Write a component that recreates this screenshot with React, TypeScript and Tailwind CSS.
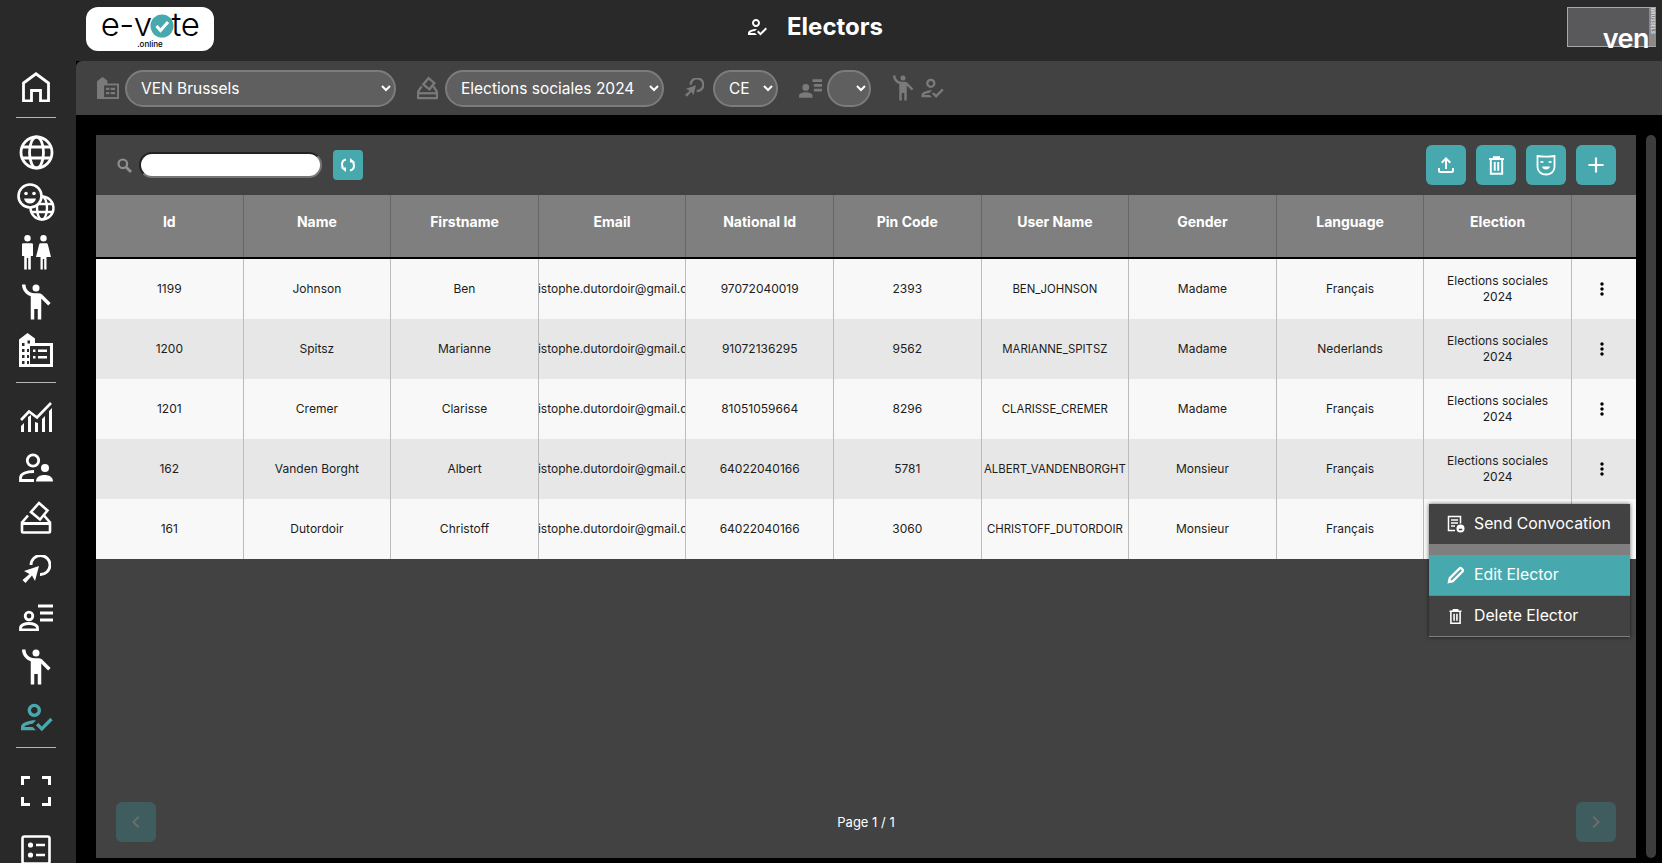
import type { ReactNode } from "react";
import {
  MdAdd,
  MdChevronLeft,
  MdChevronRight,
  MdEmojiPeople,
  MdMoreVert,
  MdOutlineFileUpload,
  MdOutlineHowToReg,
} from "react-icons/md";

const font = { fontFamily: '"Inter", "Liberation Sans", sans-serif' };

const electors = [
  ["1199", "Johnson", "Ben", "97072040019", "2393", "BEN_JOHNSON", "Madame", "Français"],
  ["1200", "Spitsz", "Marianne", "91072136295", "9562", "MARIANNE_SPITSZ", "Madame", "Nederlands"],
  ["1201", "Cremer", "Clarisse", "81051059664", "8296", "CLARISSE_CREMER", "Madame", "Français"],
  ["162", "Vanden Borght", "Albert", "64022040166", "5781", "ALBERT_VANDENBORGHT", "Monsieur", "Français"],
  ["161", "Dutordoir", "Christoff", "64022040166", "3060", "CHRISTOFF_DUTORDOIR", "Monsieur", "Français"],
];

const headers = ["Id", "Name", "Firstname", "Email", "National Id", "Pin Code", "User Name", "Gender", "Language", "Election", ""];

function HomeIcon() {
  return (
    <svg width="28" height="30" viewBox="0 0 28 30" fill="none" stroke="currentColor" strokeWidth="2.800">
      <path d="M1.500 29V11L14 1.800 26.500 11v18h-8V18.500h-9V29z" />
    </svg>
  );
}

function GlobeIcon() {
  return (
    <svg width="35" height="35" viewBox="0 0 35 35" fill="none" stroke="currentColor" strokeWidth="2.800">
      <circle cx="17.500" cy="17.500" r="15.500" />
      <ellipse cx="17.500" cy="17.500" rx="7" ry="15.500" />
      <path d="M3.500 12h28M3.500 23h28" />
    </svg>
  );
}

function FaceGlobeIcon() {
  return (
    <svg width="38" height="38" viewBox="0 0 38 38" fill="none" stroke="currentColor" strokeWidth="2.400">
      <circle cx="25" cy="25" r="11.500" />
      <ellipse cx="25" cy="25" rx="5" ry="11.500" />
      <path d="M14 21h22M14 29h22" />
      <circle cx="13" cy="13" r="11.500" fill="#292929" strokeWidth="2.600" />
      <circle cx="9" cy="10.500" r="1.800" fill="currentColor" stroke="none" />
      <circle cx="17" cy="10.500" r="1.800" fill="currentColor" stroke="none" />
      <path d="M7 15.500h12c-.8 3.500-3 5-6 5s-5.200-1.500-6-5z" fill="currentColor" stroke="none" />
    </svg>
  );
}

function PeopleIcon() {
  return (
    <svg width="30" height="35" viewBox="0 0 30 35" fill="currentColor">
      <circle cx="6.500" cy="3.200" r="3.200" />
      <circle cx="22.500" cy="3.200" r="3.200" />
      <path d="M1 9.500q0-1.200 1.200-1.200h8.600q1.200 0 1.200 1.200V21H9.800v13.500H7.200V23H5.800v11.500H3.200V21H1z" />
      <path d="M19.500 8.300h6q1 0 1.300 1L30 22h-4.500v12.500h-2.300V24h-1.400v10.500h-2.300V22H15l3.200-12.700q.3-1 1.300-1z" />
    </svg>
  );
}

function BuildingIcon() {
  return (
    <svg width="34" height="34" viewBox="0 0 34 34" fill="currentColor">
      <path d="M0 34V6.500L8.500 0 16 5.500V10h18v24z" />
      <path d="M11 13h20v18H11zM3 10h2.500v3H3zM8.500 7.500H11v3H8.500zM3 16h2.500v3H3zM3 22h2.500v3H3zM3 28h2.500v3H3zM8 16h2v3H8zM8 22h2v3H8zM8 28h2v3H8z" fill="#292929" />
      <path d="M14 16.500h2.500V19H14zM19 16.500h9V19h-9zM14 23h2.500v2.500H14zM19 23h9v2.500h-9z" />
    </svg>
  );
}

function ChartIcon() {
  return (
    <svg width="32" height="30" viewBox="0 0 32 30" fill="currentColor">
      <path d="M1 18l8-8.500 8 6L31 1" fill="none" stroke="currentColor" strokeWidth="2.600" />
      <path d="M1 30v-6l3-3v9zM8 30V15l3-2v17zM15 30V20l3 1v9zM22 30V17l3-3v16zM29 30V9l3-3v24z" />
    </svg>
  );
}

function UsersIcon() {
  return (
    <svg width="34" height="29" viewBox="0 0 34 29" fill="none" stroke="currentColor" strokeWidth="2.800">
      <circle cx="14" cy="7.500" r="5.700" />
      <path d="M15 18.500C8 18.500 1.500 20.500 1.500 25v2.500H15" />
      <circle cx="26" cy="15" r="4" fill="currentColor" stroke="none" />
      <path d="M17 28.500c0-4.500 4-6.500 8.500-6.500s8.500 2 8.500 6.500z" fill="currentColor" stroke="none" />
    </svg>
  );
}

function BallotIcon() {
  return (
    <svg width="32" height="33" viewBox="0 0 32 33" fill="none" stroke="currentColor" strokeWidth="2.600">
      <path d="M19 2l8.500 7.500-7.500 9-9-7.500z" />
      <path d="M8 14.500L2 21.500v9q0 1 1 1h26q1 0 1-1v-9l-6-7" />
      <path d="M3 22.500h26" strokeWidth="3" />
    </svg>
  );
}

function TargetIcon() {
  return (
    <svg width="30" height="30" viewBox="0 0 30 30" fill="none" stroke="currentColor" strokeWidth="2.800">
      <path d="M10 10A9.500 9.500 0 1 1 19 19.500" />
      <path d="M18 11l-4 15-3-5.500-6.500 7.500-3-3 7-6L3 16z" fill="currentColor" stroke="none" />
    </svg>
  );
}

function ListPersonIcon() {
  return (
    <svg width="34" height="27" viewBox="0 0 34 27" fill="none" stroke="currentColor" strokeWidth="2.800">
      <circle cx="10" cy="12" r="3.800" />
      <path d="M1.500 26v-2c0-3 4.500-4.500 8.500-4.500s8.500 1.500 8.500 4.500v2z" />
      <path d="M19 2h15M21 9h13M21 16h13" />
    </svg>
  );
}

function FullscreenIcon() {
  return (
    <svg width="30" height="30" viewBox="0 0 30 30" fill="none" stroke="currentColor" strokeWidth="3">
      <path d="M1.500 9V1.500H9M21 1.500h7.500V9M28.500 21v7.500H21M9 28.500H1.500V21" />
    </svg>
  );
}

function ChecklistIcon() {
  return (
    <svg width="30" height="30" viewBox="0 0 30 30" fill="none" stroke="currentColor" strokeWidth="2.600">
      <rect x="1.500" y="1.500" width="27" height="27" rx="2" />
      <circle cx="9.500" cy="10" r="2.600" fill="currentColor" stroke="none" />
      <circle cx="9.500" cy="20" r="2.600" fill="currentColor" stroke="none" />
      <path d="M15 10h9M15 20h9" />
    </svg>
  );
}

function MaskIcon() {
  return (
    <svg width="20" height="22" viewBox="0 0 20 22" fill="none" stroke="currentColor" strokeWidth="1.800">
      <path d="M1.500 2c5 .8 12 .8 17 0v11c0 4.500-4 7.500-8.500 7.500S1.500 17.500 1.500 13z" />
      <path d="M4.500 8.500c.8-1 2-1 2.800 0M12.700 8.500c.8-1 2-1 2.800 0" strokeWidth="1.500" />
      <path d="M6 12.500h8c-.6 2.200-2 3-4 3s-3.400-.8-4-3z" fill="currentColor" stroke="none" />
    </svg>
  );
}

function TrashIcon({ size }: { size: number }) {
  return (
    <svg width={size} height={size} viewBox="0 0 24 24" fill="none" stroke="currentColor" strokeWidth="2.200">
      <path d="M3.500 4.500h17M9 4.500V2.500h6v2" />
      <path d="M5.500 4.500v17h13v-17" />
      <path d="M10 8v10M14 8v10" />
    </svg>
  );
}

function PencilIcon() {
  return (
    <svg width="18" height="18" viewBox="0 0 18 18" fill="none" stroke="currentColor" strokeWidth="2.400">
      <path d="M2 16l.8-3.800L12.500 2.500c.6-.6 1.400-.6 2 0l1 1c.6.6.6 1.400 0 2L5.800 15.200z" />
    </svg>
  );
}

function ConvocationIcon() {
  return (
    <svg width="18" height="18" viewBox="0 0 18 18" fill="none" stroke="currentColor" strokeWidth="1.500">
      <path d="M8 15.500H1.500V1.500h12v7" />
      <path d="M4 5h7M4 8h7M4 11h4" />
      <circle cx="13.500" cy="13.500" r="4" fill="currentColor" stroke="none" />
      <path d="M11.800 14.500h3.400M13.500 12.200v.1" stroke="#424242" />
    </svg>
  );
}

function RefreshIcon() {
  return (
    <svg width="16" height="16" viewBox="0 0 16 16" fill="none" stroke="currentColor" strokeWidth="2">
      <path d="M6 2.500C3.500 3 2 5 2 7.500c0 1.200.4 2.300 1.200 3.200" />
      <path d="M10 13.500c2.500-.5 4-2.500 4-5 0-1.200-.4-2.300-1.200-3.200" />
      <path d="M.5 10.500h5.500V15zM15.500 5.500H10V1z" fill="currentColor" stroke="none" />
    </svg>
  );
}

function SearchIcon() {
  return (
    <svg width="15" height="15" viewBox="0 0 15 15" fill="none" stroke="currentColor" strokeWidth="2.200" className="text-[#8f8f8f]">
      <circle cx="5.800" cy="5.800" r="4.300" />
      <path d="M9 9l5 5" strokeWidth="2.800" />
    </svg>
  );
}

function SideSlot({ children, className }: { children: ReactNode; className?: string }) {
  return <div className={"flex h-[50px] shrink-0 items-center justify-center pr-1 text-white " + (className ?? "")}>{children}</div>;
}

function SideDivider({ className }: { className: string }) {
  return <div className={"mr-5 ml-4 h-px shrink-0 bg-[#b5b5b5] " + className} />;
}

function Sidebar() {
  return (
    <aside className="flex h-full w-[76px] shrink-0 flex-col overflow-hidden bg-[#292929] pt-[62px]">
      <SideSlot><HomeIcon /></SideSlot>
      <SideDivider className="mt-[5px] mb-[9px]" />
      <SideSlot><GlobeIcon /></SideSlot>
      <SideSlot><FaceGlobeIcon /></SideSlot>
      <SideSlot><PeopleIcon /></SideSlot>
      <SideSlot><MdEmojiPeople size={42} /></SideSlot>
      <SideSlot className="-mt-[2px]"><BuildingIcon /></SideSlot>
      <SideDivider className="mt-[7px] mb-[9px]" />
      <SideSlot><ChartIcon /></SideSlot>
      <SideSlot><UsersIcon /></SideSlot>
      <SideSlot><BallotIcon /></SideSlot>
      <SideSlot className="pt-[6px]"><TargetIcon /></SideSlot>
      <SideSlot><ListPersonIcon /></SideSlot>
      <SideSlot><MdEmojiPeople size={42} /></SideSlot>
      <SideSlot><MdOutlineHowToReg size={40} className="text-[#47a9ad]" /></SideSlot>
      <SideDivider className="mt-[5px] mb-[18px]" />
      <SideSlot><FullscreenIcon /></SideSlot>
      <SideSlot className="mt-[9px]"><ChecklistIcon /></SideSlot>
    </aside>
  );
}

function Logo() {
  return (
    <div className="flex h-11 w-32 flex-col items-center rounded-xl bg-white pt-px text-black">
      <div className="flex h-8 items-center text-[33px] leading-none font-light tracking-[-0.5px]">
        <span>e-v</span>
        <svg width="24" height="24" viewBox="0 0 24 24" className="mx-[-2px] mt-[3px]">
          <circle cx="12" cy="12" r="11.500" fill="#47a9ad" />
          <path d="M6.500 12l4 4.500 7.500-8.500" fill="none" stroke="#fff" strokeWidth="3" />
        </svg>
        <span>te</span>
      </div>
      <div className="text-[8px] leading-[9px] font-medium">.online</div>
    </div>
  );
}

function VenLogo() {
  return (
    <div className="relative mr-[6px] flex h-10 w-[89px] items-end justify-end border border-r-0 border-[#a8a8a8] bg-[#59595b] pr-[7px]">
      <span className="translate-y-[5px] text-[27px] leading-[24px] font-semibold tracking-[-0.5px] text-white">ven</span>
      <span className="absolute top-0 right-0 h-full w-[7px] overflow-hidden bg-[#8a8a8a] text-[5px] leading-[7px] text-white [writing-mode:vertical-rl]">BRUSSELS</span>
    </div>
  );
}

function FilterSelect({ options, className }: { options: string[]; className: string }) {
  return (
    <select className={"h-[37px] rounded-full border-2 border-[#7c7c7c] bg-[#5f5f5f] pl-[10px] text-[15.500px] text-white outline-none " + className}>
      {options.map((o) => (
        <option key={o}>{o}</option>
      ))}
    </select>
  );
}

function FilterBar() {
  return (
    <div className="flex h-[54px] shrink-0 items-center rounded-tl-md bg-[#424242] pl-[21px] text-[#7a7a7a]">
      <BuildingIcon2 />
      <FilterSelect options={["VEN Brussels"]} className="ml-[6px] w-[271px]" />
      <div className="ml-[21px]"><BallotSmall /></div>
      <FilterSelect options={["Elections sociales 2024"]} className="ml-[7px] w-[219px]" />
      <div className="ml-[20px]"><TargetSmall /></div>
      <FilterSelect options={["CE"]} className="ml-[9px] w-[65px]" />
      <div className="ml-[21px]"><ListSmall /></div>
      <FilterSelect options={[""]} className="ml-[5px] w-[44px]" />
      <MdEmojiPeople size={30} className="ml-[17px]" />
      <MdOutlineHowToReg size={28} className="ml-0" />
    </div>
  );
}

function BuildingIcon2() {
  return (
    <svg width="22" height="22" viewBox="0 0 34 34" fill="currentColor">
      <path d="M0 34V6.500L8.500 0 16 5.500V10h18v24z" />
      <path d="M11 13h20v18H11z" fill="#424242" />
      <path d="M14 16.500h5V20h-5zM21 16.500h7V20h-7zM14 23h5v3.500h-5zM21 23h7v3.500h-7z" />
    </svg>
  );
}

function BallotSmall() {
  return (
    <svg width="21" height="24" viewBox="0 0 32 34" fill="none" stroke="currentColor" strokeWidth="3.500">
      <path d="M17.500 2l9 7.500-7.500 9.500-9.500-7.500z" />
      <path d="M7 14.500L1.500 23v8.500q0 1 1 1h27q1 0 1-1V23L25 14.500" />
      <path d="M3 25h26" />
    </svg>
  );
}

function TargetSmall() {
  return (
    <svg width="20" height="20" viewBox="0 0 30 30" fill="none" stroke="currentColor" strokeWidth="3.500">
      <path d="M10 10A9.500 9.500 0 1 1 19 19.500" />
      <path d="M18 11l-4 15-3-5.500-6.500 7.500-3-3 7-6L3 16z" fill="currentColor" stroke="none" />
    </svg>
  );
}

function ListSmall() {
  return (
    <svg width="23" height="19" viewBox="0 0 34 27" fill="currentColor">
      <circle cx="10" cy="12" r="5" />
      <path d="M0 27v-3c0-3 5-5 10-5s10 2 10 5v3z" />
      <path d="M20 0h14v4H20zM22 7h12v4H22zM22 14h12v4H22z" />
    </svg>
  );
}

function ActionButton({ children }: { children: ReactNode }) {
  return <button className="flex size-10 items-center justify-center rounded-md bg-[#47a9ad] text-white">{children}</button>;
}

function Row({ row, index }: { row: string[]; index: number }) {
  const [id, name, first, nationalId, pin, user, gender, language] = row;
  const cells = [id, name, first, "christophe.dutordoir@gmail.com", nationalId, pin, user, gender, language];
  return (
    <div className={"grid h-[60px] grid-cols-[repeat(10,147.600px)_1fr] text-[12px] text-[#1c1c1c] " + (index % 2 === 0 ? "bg-[#f8f8f8]" : "bg-[#e7e7e7]")}>
      {cells.map((c, i) => (
        <div key={i} className="flex items-center justify-center overflow-hidden border-r border-[#bcbcbc] whitespace-nowrap">
          <span className={i === 6 ? "shrink-0 text-[11.400px] leading-4" : "shrink-0 leading-4"}>{c}</span>
        </div>
      ))}
      <div className="flex items-center justify-center border-r border-[#bcbcbc] px-5 text-center leading-4">Elections sociales 2024</div>
      <div className="flex items-center justify-center pr-[3px]">
        {index < 4 && <MdMoreVert size={20} className="text-black" />}
      </div>
    </div>
  );
}

function ContextMenu() {
  return (
    <div className="absolute top-[369px] left-[1333px] w-[201px] bg-[#424242] text-[15.800px] text-white shadow-[0_0_4px_rgba(0,0,0,0.6)]">
      <div className="flex h-10 items-center pl-[18px]">
        <ConvocationIcon />
        <span className="ml-[9px]">Send Convocation</span>
      </div>
      <div className="h-[11px] bg-[#7f7f7f]" />
      <div className="flex h-[41px] items-center border-b border-[#7f7f7f] bg-[#47a9ad] pl-[18px]">
        <PencilIcon />
        <span className="ml-[9px]">Edit Elector</span>
      </div>
      <div className="flex h-[41px] items-center border-b border-[#7f7f7f] pl-[18px]">
        <TrashIcon size={17} />
        <span className="ml-[10px]">Delete Elector</span>
      </div>
    </div>
  );
}

function Panel() {
  return (
    <section className="relative flex h-[723px] w-[1540px] flex-col bg-[#424242]">
      <div className="flex h-[60px] shrink-0 items-center pr-5 pl-[21px]">
        <SearchIcon />
        <input className="ml-[7px] h-[26px] w-[183px] rounded-full border-2 border-t-[#222] border-r-[#777] border-b-[#777] border-l-[#222] bg-white" />
        <button className="ml-[11px] flex size-[30px] items-center justify-center rounded bg-[#47a9ad] text-white">
          <RefreshIcon />
        </button>
        <div className="ml-auto flex gap-[10px]">
          <ActionButton><MdOutlineFileUpload size={24} /></ActionButton>
          <ActionButton><TrashIcon size={21} /></ActionButton>
          <ActionButton><MaskIcon /></ActionButton>
          <ActionButton><MdAdd size={26} /></ActionButton>
        </div>
      </div>
      <div className="grid h-[64px] shrink-0 grid-cols-[repeat(10,147.600px)_1fr] border-b-2 border-black bg-[#7f7f7f] text-[14px] font-bold text-white">
        {headers.map((h, i) => (
          <div key={i} className="flex items-start justify-center border-r border-[#666] pt-4 last:border-r-0">{h}</div>
        ))}
      </div>
      {electors.map((row, i) => (
        <Row key={row[0]} row={row} index={i} />
      ))}
      <ContextMenu />
      <div className="mt-auto flex items-center justify-between px-5 pb-4">
        <button className="flex size-10 items-center justify-center rounded-md bg-[#3f5c5e] text-[#6c6c6c]"><MdChevronLeft size={24} /></button>
        <span className="pt-px text-[13px] text-white">Page 1 / 1</span>
        <button className="flex size-10 items-center justify-center rounded-md bg-[#3f5c5e] text-[#6c6c6c]"><MdChevronRight size={24} /></button>
      </div>
    </section>
  );
}

export default function App() {
  return (
    <div className="flex h-[863px] w-[1662px] overflow-hidden bg-black" style={font}>
      <Sidebar />
      <div className="flex min-w-0 flex-1 flex-col">
        <header className="flex h-[61px] shrink-0 items-start bg-[#292929] pt-[7px] pl-[10px]">
          <Logo />
          <div className="ml-[531px] flex h-10 items-center text-white">
            <MdOutlineHowToReg size={24} />
            <h1 className="ml-[18px] text-[24px] font-bold">Electors</h1>
          </div>
          <div className="ml-auto"><VenLogo /></div>
        </header>
        <FilterBar />
        <div className="flex flex-1 items-start pt-5 pl-5">
          <Panel />
          <div className="ml-[10px] h-[723px] w-[10px] rounded-full bg-[#3d3d3d]" />
        </div>
      </div>
    </div>
  );
}
